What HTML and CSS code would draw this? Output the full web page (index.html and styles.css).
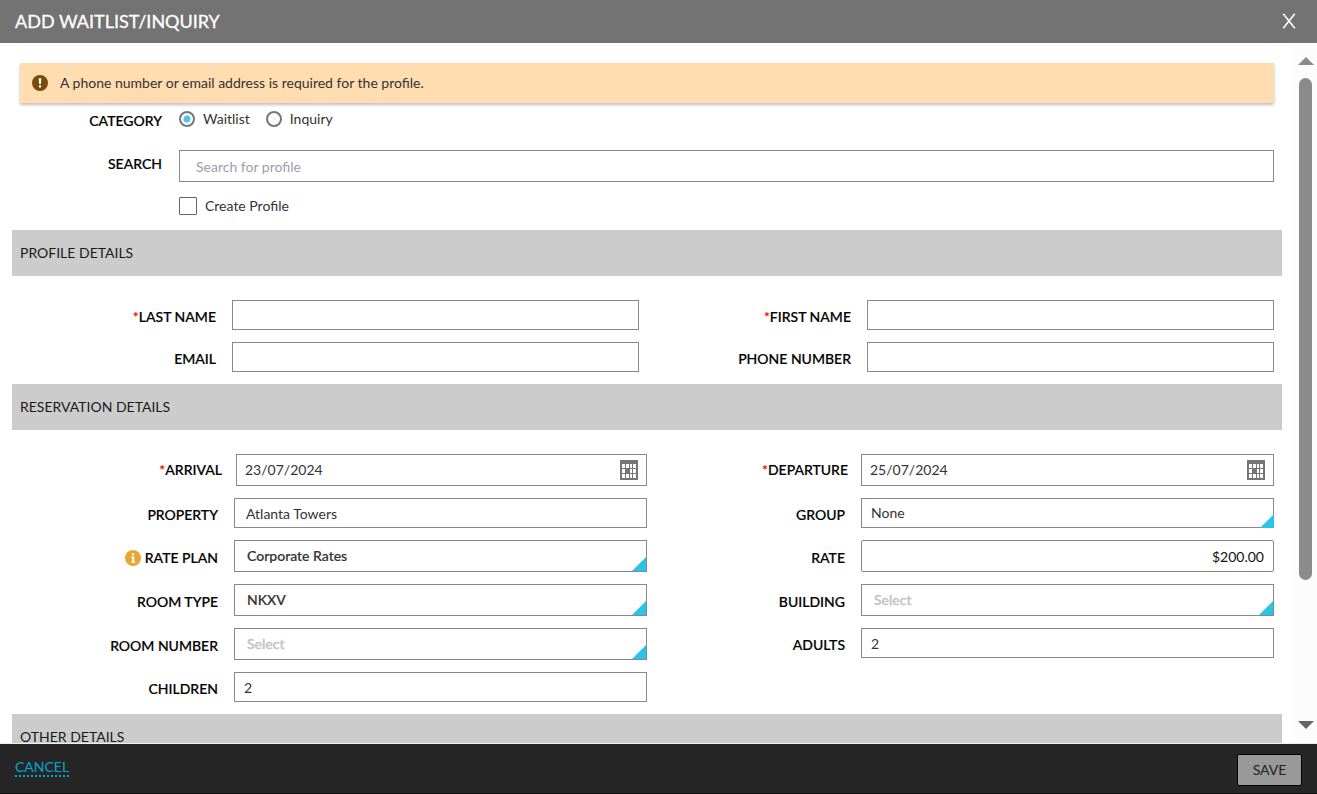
FILE: index.html
```html
<!DOCTYPE html>
<html lang="en">
<head>
<meta charset="utf-8">
<title>Add Waitlist/Inquiry</title>
<link rel="stylesheet" href="styles.css">
</head>
<body>
<header class="titlebar">
  <h1>ADD WAITLIST/INQUIRY</h1>
  <button class="close" type="button" aria-label="Close">
    <svg width="14" height="16" viewBox="0 0 14 16"><path d="M1.2 .8 12.8 15.2M12.8 .8 1.2 15.2" stroke="#fff" stroke-width="1.6" fill="none"/></svg>
  </button>
</header>

<div class="viewport">
  <form class="content" id="waitlist">
    <div class="alert" role="alert">
      <svg width="16" height="16" viewBox="0 0 16 16"><circle cx="8" cy="8" r="8" fill="#754c0c"/><path d="M6.7 3.2h2.6L8.9 9H7.1zM7 10.3h2v2.2H7z" fill="#fff"/></svg>
      <span>A phone number or email address is required for the profile.</span>
    </div>

    <div class="top-row category" role="radiogroup" aria-labelledby="category-label">
      <span class="label" id="category-label">CATEGORY</span>
      <div class="options">
        <label><input type="radio" name="category" checked>Waitlist</label>
        <label><input type="radio" name="category">Inquiry</label>
      </div>
    </div>
    <div class="top-row search">
      <label class="label" for="search">SEARCH</label>
      <input class="box tall" id="search" type="text" placeholder="Search for profile">
    </div>
    <div class="create"><label><input type="checkbox">Create Profile</label></div>

    <h2>PROFILE DETAILS</h2>
    <div class="grid profile">
      <div class="field"><label class="label" for="last"><b>*</b>LAST NAME</label><input class="box" id="last" type="text"></div>
      <div class="field"><label class="label" for="first"><b>*</b>FIRST NAME</label><input class="box" id="first" type="text"></div>
      <div class="field"><label class="label" for="email">EMAIL</label><input class="box" id="email" type="text"></div>
      <div class="field"><label class="label" for="phone">PHONE NUMBER</label><input class="box" id="phone" type="text"></div>
    </div>

    <h2>RESERVATION DETAILS</h2>
    <div class="grid reservation">
      <div class="field date arrival"><label class="label" for="arrival"><b>*</b>ARRIVAL</label>
        <div class="box tall picker"><input id="arrival" type="text" value="23/07/2024">
          <button type="button" aria-label="Choose arrival date"><svg width="18" height="20" viewBox="0 0 18 20"><path d="M0 0h18v20H0z" fill="#757575"/><path d="M2 4h3v4H2zM6 4h3v4H6zM10 4h2v4h-2zM13 4h3v4h-3zM2 9h3v4H2zM10 9h2v4h-2zM13 9h3v4h-3zM2 14h3v4H2zM6 14h3v4H6zM10 14h2v4h-2zM13 14h3v4h-3z" fill="#fff"/></svg></button></div></div>
      <div class="field date"><label class="label" for="departure"><b>*</b>DEPARTURE</label>
        <div class="box tall picker"><input id="departure" type="text" value="25/07/2024">
          <button type="button" aria-label="Choose departure date"><svg width="18" height="20" viewBox="0 0 18 20"><path d="M0 0h18v20H0z" fill="#757575"/><path d="M2 4h3v4H2zM6 4h3v4H6zM10 4h2v4h-2zM13 4h3v4h-3zM2 9h3v4H2zM10 9h2v4h-2zM13 9h3v4h-3zM2 14h3v4H2zM6 14h3v4H6zM10 14h2v4h-2zM13 14h3v4h-3z" fill="#fff"/></svg></button></div></div>

      <div class="field"><label class="label" for="property">PROPERTY</label><input class="box indent" id="property" type="text" value="Atlanta Towers"></div>
      <div class="field"><label class="label" for="group">GROUP</label><div class="drop flush"><select class="box" id="group"><option>None</option></select></div></div>

      <div class="field"><label class="label" for="plan"><svg width="16" height="16" viewBox="0 0 16 16"><circle cx="8" cy="8" r="8" fill="#e8a735"/><path d="M7 3.2h2.2v2H7zM6.2 6.4h3v5h1v1.3h-4v-1.3h1V7.7h-1z" fill="#fff"/></svg>RATE PLAN</label><div class="drop"><select class="box tall strong" id="plan"><option>Corporate Rates</option></select></div></div>
      <div class="field"><label class="label" for="rate">RATE</label><input class="box tall rate" id="rate" type="text" value="$200.00"></div>

      <div class="field"><label class="label" for="type">ROOM TYPE</label><div class="drop"><select class="box tall strong" id="type"><option>NKXV</option></select></div></div>
      <div class="field"><label class="label" for="building">BUILDING</label><div class="drop"><select class="box tall strong empty" id="building"><option>Select</option></select></div></div>

      <div class="field"><label class="label" for="number">ROOM NUMBER</label><div class="drop"><select class="box tall strong empty" id="number"><option>Select</option></select></div></div>
      <div class="field"><label class="label" for="adults">ADULTS</label><input class="box" id="adults" type="text" value="2"></div>

      <div class="field"><label class="label" for="children">CHILDREN</label><input class="box" id="children" type="text" value="2"></div>
    </div>

    <h2>OTHER DETAILS</h2>
  </form>
  <div class="scroll" aria-hidden="true">
    <span class="up"></span>
    <div class="track"><div class="thumb"></div></div>
    <span class="down"></span>
  </div>
</div>

<footer class="actions">
  <a href="#cancel">CANCEL</a>
  <button type="submit" form="waitlist">SAVE</button>
</footer>
</body>
</html>
```

FILE: styles.css
```css
* { box-sizing: border-box; }
body {
  margin: 0;
  height: 100vh;
  display: flex;
  flex-direction: column;
  font: 14px/20px Lato, "Open Sans", sans-serif;
  color: #333;
  background: #fff;
}
input, select, button { font: inherit; color: inherit; }
h1, h2 { margin: 0; }

.titlebar {
  display: flex;
  align-items: center;
  justify-content: space-between;
  height: 43px;
  flex: none;
  padding: 0 21px 1px 15px;
  background: #737373;
  color: #fff;
}
h1 { font-size: 18px; font-weight: 400; -webkit-text-stroke: .3px #fff; }
.close { display: flex; padding: 0; border: 0; background: none; }

.viewport { flex: 1; min-height: 0; display: flex; }
.content { flex: 1; min-width: 0; overflow: hidden; padding: 20px 12px 0; }

.alert {
  display: flex;
  align-items: center;
  gap: 12px;
  height: 40px;
  margin: 0 8px;
  padding: 0 12px;
  background: #ffddb0;
  box-shadow: 0 2px 3px rgba(0, 0, 0, .25);
}

.label {
  flex: none;
  display: flex;
  align-items: center;
  justify-content: flex-end;
  padding: 4px 16px 0 0;
  color: #000;
  font-weight: 500;
  -webkit-text-stroke: .2px #000;
}
.label b { color: red; font-weight: 700; -webkit-text-stroke: 0; }
.label svg { margin-right: 4px; }

.top-row { display: flex; align-items: center; margin-right: 8px; }
.top-row .label { width: 167px; padding-right: 17px; }
.category { height: 32px; }
.options { display: flex; gap: 16px; }
.options label, .create label { display: flex; align-items: center; }
.search { align-items: flex-start; margin-top: 15px; }
.options input {
  appearance: none;
  width: 16px;
  height: 16px;
  margin: 0 8px 0 0;
  border: 2px solid #777;
  border-radius: 50%;
  background: radial-gradient(circle, #d5effa 0 1px, #fff 1px);
}
.options input:checked { background: radial-gradient(circle, #4fc3ea 0 3px, #fff 4px); }
.create { padding: 15px 0 15px 167px; }
.create label { height: 18px; }
.create input {
  appearance: none;
  width: 18px;
  height: 18px;
  margin: 0 8px 0 0;
  border: 1px solid #666;
  border-radius: 1px;
}

h2 {
  height: 46px;
  padding: 0 8px;
  background: #ccc;
  color: #1a1a1a;
  font-size: 14px;
  line-height: 46px;
  font-weight: 400;
}

.grid {
  display: grid;
  grid-template-columns: 1fr 1fr;
  align-items: start;
  row-gap: 12px;
  padding: 24px 0 12px;
}
.field { display: flex; min-width: 0; }
.profile .field { padding-right: 8px; }
.profile .label { width: 220px; }
.reservation { margin: 0 8px; }
.reservation .label { width: 214px; }
.reservation .date .label { padding: 0 13px 0 0; }
.reservation .arrival .label { width: 216px; padding-right: 14px; }

.box {
  flex: 1;
  min-width: 0;
  width: 100%;
  height: 30px;
  padding: 0 9px;
  border: 1px solid #888;
  border-radius: 0;
  background: #fff;
}
.tall { height: 32px; }
.indent { padding-left: 11px; }
.rate { text-align: right; color: #111; border-radius: 2px; }
#search { padding-left: 16px; }
#search::placeholder { color: #9a9fab; }

.picker { display: flex; align-items: center; padding: 0 8px; }
.picker input { flex: 1; min-width: 0; padding: 0; border: 0; background: none; }
.picker button { display: flex; padding: 0; border: 0; background: none; }

.drop { position: relative; flex: 1; min-width: 0; display: flex; }
.drop::after {
  content: "";
  position: absolute;
  right: 1px;
  bottom: 1px;
  width: 14px;
  height: 14px;
  background: #29c4e8;
  clip-path: polygon(100% 0, 100% 100%, 0 100%);
  pointer-events: none;
}
.flush::after { right: 0; bottom: 0; }
select { appearance: none; }
.strong { padding-left: 12px; font-weight: 500; -webkit-text-stroke: .2px #333; }
.empty { color: #c4c4c4; -webkit-text-stroke: .4px #c4c4c4; }

.scroll {
  flex: none;
  width: 23px;
  display: flex;
  flex-direction: column;
  align-items: center;
  padding: 14px 0;
  background: #fcfcfc;
}
.up, .down { border: 8px solid transparent; }
.up { border-top: 0; border-bottom-color: #8b8b8b; }
.down { border-bottom: 0; border-top-color: #666; }
.track { flex: 1; width: 13px; padding: 13px 0 16px; }
.thumb { height: 80%; border-radius: 7px; background: #8b8b8b; }

.actions {
  flex: none;
  display: flex;
  align-items: center;
  justify-content: space-between;
  height: 51px;
  padding: 2px 15px 0;
  border-top: 1px solid #eee;
  border-bottom: 1px solid #111;
  background: #262626;
}
.actions a {
  margin-bottom: 4px;
  color: #00a5d3;
  line-height: 17px;
  text-decoration: none;
  border-bottom: 2px dotted #00a5d3;
}
.actions button {
  height: 32px;
  width: 65px;
  padding: 0;
  border: 1px solid #000;
  border-radius: 2px;
  background: #999;
  color: #222;
}
```
